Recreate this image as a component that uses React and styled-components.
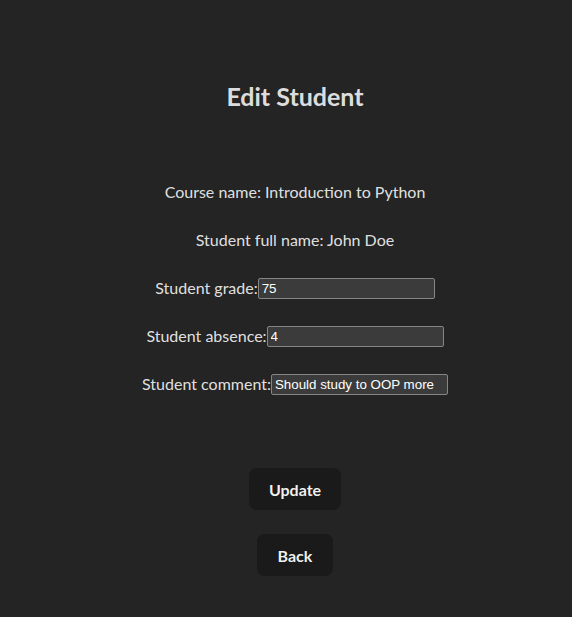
import React from "react";
import styled, { createGlobalStyle } from "styled-components";

const Global = createGlobalStyle`
  html, body { margin: 0; padding: 0; background: #242424; }
  body {
    font-family: Lato, "Noto Sans", sans-serif;
    color: rgba(255,255,255,0.87);
    min-height: 617px;
  }
`;

const Page = styled.div`
  display: flex;
  flex-direction: column;
  align-items: center;
  padding-top: 78px;
  padding-left: 18px;
`;

const Title = styled.h2`
  margin: 0;
  font-size: 25px;
  line-height: 36px;
  font-weight: 700;
`;

const Form = styled.div`
  display: flex;
  flex-direction: column;
  align-items: center;
  gap: 24px;
  margin-top: 66px;
`;

const Row = styled.div`
  display: flex;
  align-items: center;
  height: 24px;
  font-size: 16px;
  line-height: 24px;
`;

const Field = styled.input`
  box-sizing: border-box;
  width: 177px;
  height: 21px;
  padding: 1px 3px;
  background: #3b3b3b;
  border: 1px solid #858585;
  border-radius: 2px;
  color: #fff;
  font-family: "Liberation Sans", Arial, sans-serif;
  font-size: 13.33px;
  outline: none;
`;

const Actions = styled.div`
  display: flex;
  flex-direction: column;
  align-items: center;
  gap: 24px;
  margin-top: 72px;
`;

const Button = styled.button`
  border-radius: 8px;
  border: 1px solid transparent;
  padding: 0.6em 1.2em;
  font-size: 16px;
  line-height: 21px;
  font-weight: 700;
  font-family: inherit;
  background: #1a1a1a;
  color: rgba(255,255,255,0.95);
  cursor: pointer;
`;

export default function App() {
  return (
    <>
      <Global />
      <Page>
        <Title>Edit Student</Title>
        <Form>
          <Row>Course name: Introduction to Python</Row>
          <Row>Student full name: John Doe</Row>
          <Row>Student grade:<Field defaultValue="75" /></Row>
          <Row>Student absence:<Field defaultValue="4" /></Row>
          <Row>Student comment:<Field defaultValue="Should study to OOP more" /></Row>
        </Form>
        <Actions>
          <Button>Update</Button>
          <Button>Back</Button>
        </Actions>
      </Page>
    </>
  );
}
